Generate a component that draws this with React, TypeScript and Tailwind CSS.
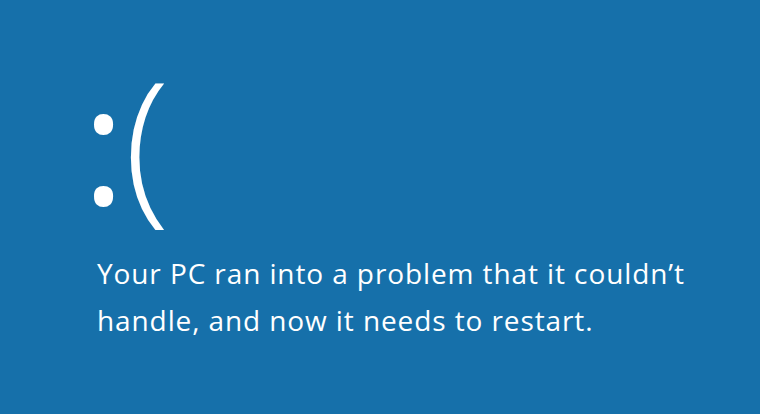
export default function App(): JSX.Element {
    return (
        <div className="w-[760px] h-[414px] bg-[#1670aa] text-white flex flex-col pl-[97px] pt-[60px] font-['Open_Sans',sans-serif] overflow-hidden">
            <div className="flex items-start h-[190px] -ml-[15px]">
                <span className="text-[164px] leading-none font-normal mt-[0px]">:</span>
                <span className="text-[168px] leading-none font-light -mt-[6px] -ml-[1px]">(</span>
            </div>
            <p className="text-[28px] leading-[47px] tracking-[0.9px] w-[640px]">
                Your PC ran into a problem that it couldn’t handle, and now it needs to restart.
            </p>
        </div>
    );
}
